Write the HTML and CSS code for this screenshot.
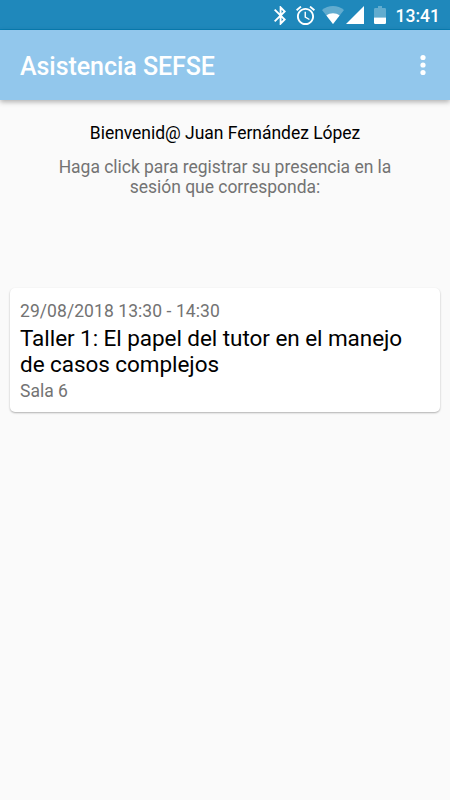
FILE: index.html
```
<!DOCTYPE html>
<html lang="es">
<head>
<meta charset="UTF-8">
<meta name="viewport" content="width=device-width, initial-scale=1.0">
<title>Asistencia SEFSE</title>
<link rel="stylesheet" href="styles.css">
</head>
<body>
<!-- Barra de estado -->
<div class="status-bar">
  <svg class="icon-bluetooth" viewBox="5 2 12.71 20"><path d="M17.71 7.71L12 2h-1v7.59L6.41 5 5 6.41 10.59 12 5 17.59 6.41 19 11 14.41V22h1l5.71-5.71-4.3-4.29 4.3-4.29zM13 5.83l1.88 1.88L13 9.59V5.83zm1.88 10.46L13 18.17v-3.76l1.88 1.88z"/></svg>
  <svg class="icon-alarm" viewBox="2 2 20 20"><path d="M22 5.72l-4.6-3.86-1.29 1.53 4.6 3.86L22 5.72zM7.88 3.39L6.6 1.86 2 5.71l1.29 1.53 4.59-3.85zM12.5 8H11v6l4.75 2.85.75-1.23-4-2.37V8zM12 4c-4.97 0-9 4.03-9 9s4.02 9 9 9c4.97 0 9-4.03 9-9s-4.03-9-9-9zm0 16c-3.87 0-7-3.13-7-7s3.13-7 7-7 7 3.13 7 7-3.13 7-7 7z"/></svg>
  <svg class="icon-wifi" viewBox="0 0 22 18">
    <path class="faded" d="M0 3.9C3.1 1.4 6.9 0 11 0s7.9 1.4 11 3.9L11 18z"/>
    <path d="M4.4 9.5C6.3 8 8.5 7.2 11 7.2s4.7.8 6.6 2.3L11 18z"/>
  </svg>
  <svg class="icon-signal" viewBox="0 0 18 18"><path d="M0 18h18V0z"/></svg>
  <svg class="icon-battery" viewBox="0 0 12 18">
    <path class="faded" d="M1.2 2H4V0h4v2h2.8Q12 2 12 3.2V11.5H0V3.2Q0 2 1.2 2z"/>
    <path d="M0 11.5h12v5.3q0 1.2-1.2 1.2H1.2Q0 18 0 16.8z"/>
  </svg>
  <span class="clock">13:41</span>
</div>
<!-- Cabecera -->
<header class="app-bar">
  <h1 class="app-title">Asistencia SEFSE</h1>
  <svg class="icon-menu" viewBox="0 0 6 22"><circle cx="3" cy="3.5" r="2.6"/><circle cx="3" cy="11" r="2.6"/><circle cx="3" cy="18.5" r="2.6"/></svg>
</header>
<main class="content">
  <p class="welcome">Bienvenid@ Juan Fernández López</p>
  <p class="help">Haga click para registrar su presencia en la sesión que corresponda:</p>
  <!-- Sesiones -->
  <div class="card">
    <p class="card-info card-date">29/08/2018 13:30 - 14:30</p>
    <h2 class="card-title">Taller 1: El papel del tutor en el manejo de casos complejos</h2>
    <p class="card-info">Sala 6</p>
  </div>
</main>
</body>
</html>
```
FILE: styles.css
```
body {
  margin: 0;
  min-height: 100vh;
  background-color: #fafafa;
  font-family: Roboto, "Liberation Sans", sans-serif;
}
h1, h2, p {
  margin: 0;
  font-weight: 400;
}
svg {
  display: block;
  flex: none;
  fill: #fff;
}
.faded {
  opacity: 0.3;
}

/* Barra de estado */
.status-bar {
  display: flex;
  align-items: center;
  justify-content: flex-end;
  box-sizing: border-box;
  height: 30px;
  padding: 1px 10px 0 0;
  background-color: #1f88bb;
  border-bottom: 1px solid #087fb5;
  color: #fff;
}
.icon-bluetooth {
  width: 12px;
  height: 19px;
  margin-right: 10px;
}
.icon-alarm {
  width: 19px;
  height: 19px;
  margin-right: 7px;
}
.icon-wifi {
  width: 22px;
  height: 18px;
  margin-right: 2px;
}
.icon-signal {
  width: 18px;
  height: 18px;
  margin-right: 10px;
}
.icon-battery {
  width: 12px;
  height: 18px;
  margin-right: 10px;
}
.clock {
  padding-top: 2px;
  font-size: 17.5px;
  font-weight: 500;
  line-height: 20px;
}

/* Cabecera */
.app-bar {
  display: flex;
  align-items: center;
  justify-content: space-between;
  height: 70px;
  padding: 0 24px 0 20px;
  background-color: #92c7ec;
  box-shadow: 0 2px 5px rgba(0, 0, 0, 0.3);
}
.app-title {
  padding-top: 3px;
  color: #fff;
  font-size: 25px;
  font-weight: 500;
  line-height: 30px;
  letter-spacing: -0.05px;
}
.icon-menu {
  width: 6px;
  height: 22px;
}

/* Contenido */
.content {
  padding: 23px 10px 0;
}
.welcome {
  color: #000;
  font-size: 17.5px;
  line-height: 21px;
  letter-spacing: -0.03px;
  text-align: center;
}
.help {
  padding: 13px 40px 0;
  color: #737373;
  font-size: 17.5px;
  line-height: 20px;
  letter-spacing: -0.03px;
  text-align: center;
}
.card {
  margin-top: 91px;
  padding: 13px 10px 10px;
  border-radius: 5px;
  background-color: #fff;
  box-shadow: 0 1px 2px rgba(0, 0, 0, 0.3);
}
.card-info {
  color: #737373;
  font-size: 17.5px;
  line-height: 21px;
}
.card-date {
  letter-spacing: 0.07px;
}
.card-title {
  padding: 3px 0 4px;
  color: #000;
  font-size: 22.5px;
  line-height: 26px;
  letter-spacing: -0.06px;
}
```
